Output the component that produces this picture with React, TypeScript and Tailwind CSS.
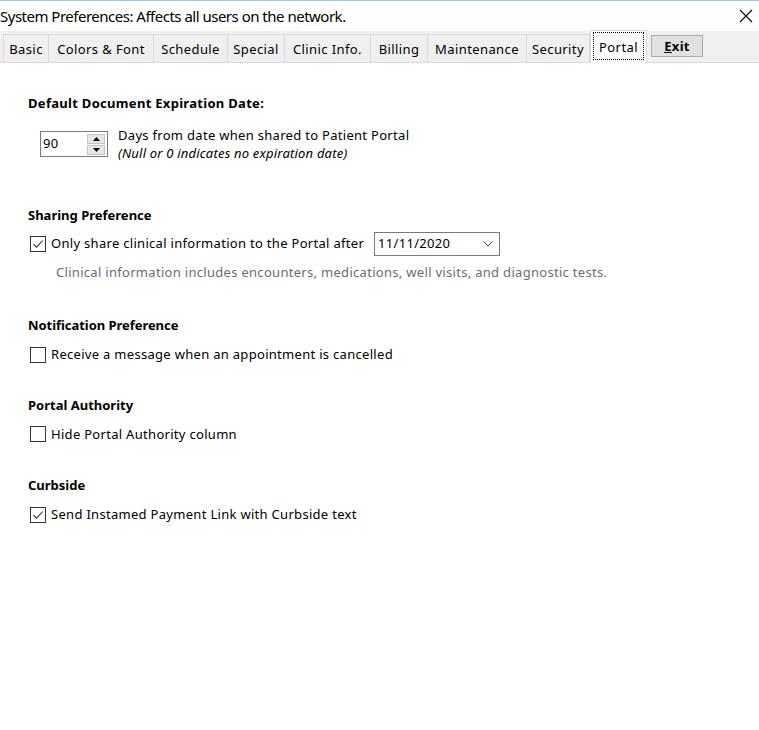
import React from "react";

const font = { fontFamily: '"Noto Sans", "Open Sans", sans-serif' };

function Check({ checked }: { checked: boolean }) {
  return (
    <span className="inline-flex w-[16px] h-[16px] border border-[#333] bg-white items-center justify-center shrink-0">
      {checked && (
        <svg width="12" height="12" viewBox="0 0 12 12">
          <path d="M1.5 6.2 L4.5 9.2 L10.7 2.5" fill="none" stroke="#333" strokeWidth="1.1" />
        </svg>
      )}
    </span>
  );
}

const tabs = [
  { t: "Basic", w: 46 },
  { t: "Colors & Font", w: 105 },
  { t: "Schedule", w: 74 },
  { t: "Special", w: 57 },
  { t: "Clinic Info.", w: 86 },
  { t: "Billing", w: 57 },
  { t: "Maintenance", w: 99 },
  { t: "Security", w: 63 },
];

export default function App() {
  return (
    <div className="w-[759px] h-[730px] bg-white relative overflow-hidden text-[#000]" style={font}>
      <div className="h-[1px] bg-[#99c9ef]" />
      <div className="h-[30px] flex items-center justify-between">
        <span className="text-[15px] tracking-[-0.5px] leading-none">System Preferences: Affects all users on the network.</span>
        <svg width="14" height="14" viewBox="0 0 14 14" className="mr-[6px]">
          <path d="M1 1 L13 13 M13 1 L1 13" stroke="#111" strokeWidth="1.2" />
        </svg>
      </div>
      <div className="h-[32px] bg-[#f0f0f0] border-b border-[#dadada] flex items-end pl-[3px]">
        <div className="flex h-[28px]">
          {tabs.map((tab) => (
            <div
              key={tab.t}
              className="h-full border-r border-t border-[#dadada] first:border-l flex items-center justify-center text-[13px] tracking-[0.4px] pt-[3px]"
              style={{ width: tab.w }}
            >
              {tab.t}
            </div>
          ))}
        </div>
        <div className="w-[57px] h-[33px] bg-white border-x border-t border-[#dadada] -mb-[1px] flex items-start justify-center pt-[1px]">
          <div className="border border-dotted border-black w-[51px] h-[28px] flex items-center justify-center text-[13px] tracking-[0.4px] pt-[4px]">
            Portal
          </div>
        </div>
        <div className="ml-[4px] mb-[5px] w-[52px] h-[22px] bg-[#e1e1e1] border border-[#adadad] flex items-center justify-center text-[13px] font-bold tracking-[0.3px] pt-[1px]">
          <span><span className="underline">E</span>xit</span>
        </div>
      </div>

      <div className="pl-[28px] text-[13px] tracking-[0.3px]">
        <div className="mt-[31px] font-bold leading-[18px]">Default Document Expiration Date:</div>
        <div className="flex mt-[19px] ml-[12px]">
          <div className="w-[68px] h-[26px] border border-[#7a7a7a] flex items-center justify-between pl-[2px] pr-[2px]">
            <span className="text-[13px]">90</span>
            <div className="flex flex-col gap-[1px]">
              <div className="w-[18px] h-[10px] bg-[#e6e6e6] border border-[#c4c4c4] flex items-center justify-center">
                <svg width="7" height="4" viewBox="0 0 7 4"><path d="M0 4 L3.5 0 L7 4Z" fill="#000" /></svg>
              </div>
              <div className="w-[18px] h-[10px] bg-[#e6e6e6] border border-[#c4c4c4] flex items-center justify-center">
                <svg width="7" height="4" viewBox="0 0 7 4"><path d="M0 0 L3.5 4 L7 0Z" fill="#000" /></svg>
              </div>
            </div>
          </div>
          <div className="ml-[10px] -mt-[5px] leading-[18px]">
            <div>Days from date when shared to Patient Portal</div>
            <div className="italic tracking-[0.2px]">(Null or 0 indicates no expiration date)</div>
          </div>
        </div>

        <div className="mt-[44px] font-bold leading-[18px] tracking-[0px]">Sharing Preference</div>
        <div className="flex items-center mt-[8px] ml-[2px]">
          <Check checked />
          <span className="ml-[5px]">Only share clinical information to the Portal after</span>
          <div className="ml-[10px] w-[126px] h-[24px] border border-[#7a7a7a] flex items-center justify-between pl-[3px] pr-[6px]">
            <span>11/11/2020</span>
            <svg width="10" height="6" viewBox="0 0 10 6"><path d="M0.5 0.5 L5 5 L9.5 0.5" fill="none" stroke="#444" strokeWidth="1" /></svg>
          </div>
        </div>
        <div className="mt-[7px] ml-[28px] text-[#6d6d6d] leading-[18px]">
          Clinical information includes encounters, medications, well visits, and diagnostic tests.
        </div>

        <div className="mt-[35px] font-bold leading-[18px] tracking-[-0.05px]">Notification Preference</div>
        <div className="flex items-center mt-[11px] ml-[2px]">
          <Check checked={false} />
          <span className="ml-[5px]">Receive a message when an appointment is cancelled</span>
        </div>

        <div className="mt-[31px] font-bold leading-[18px] tracking-[0px]">Portal Authority</div>
        <div className="flex items-center mt-[11px] ml-[2px]">
          <Check checked={false} />
          <span className="ml-[5px]">Hide Portal Authority column</span>
        </div>

        <div className="mt-[32px] font-bold leading-[18px] tracking-[0px]">Curbside</div>
        <div className="flex items-center mt-[11px] ml-[2px]">
          <Check checked />
          <span className="ml-[5px]">Send Instamed Payment Link with Curbside text</span>
        </div>
      </div>
    </div>
  );
}
